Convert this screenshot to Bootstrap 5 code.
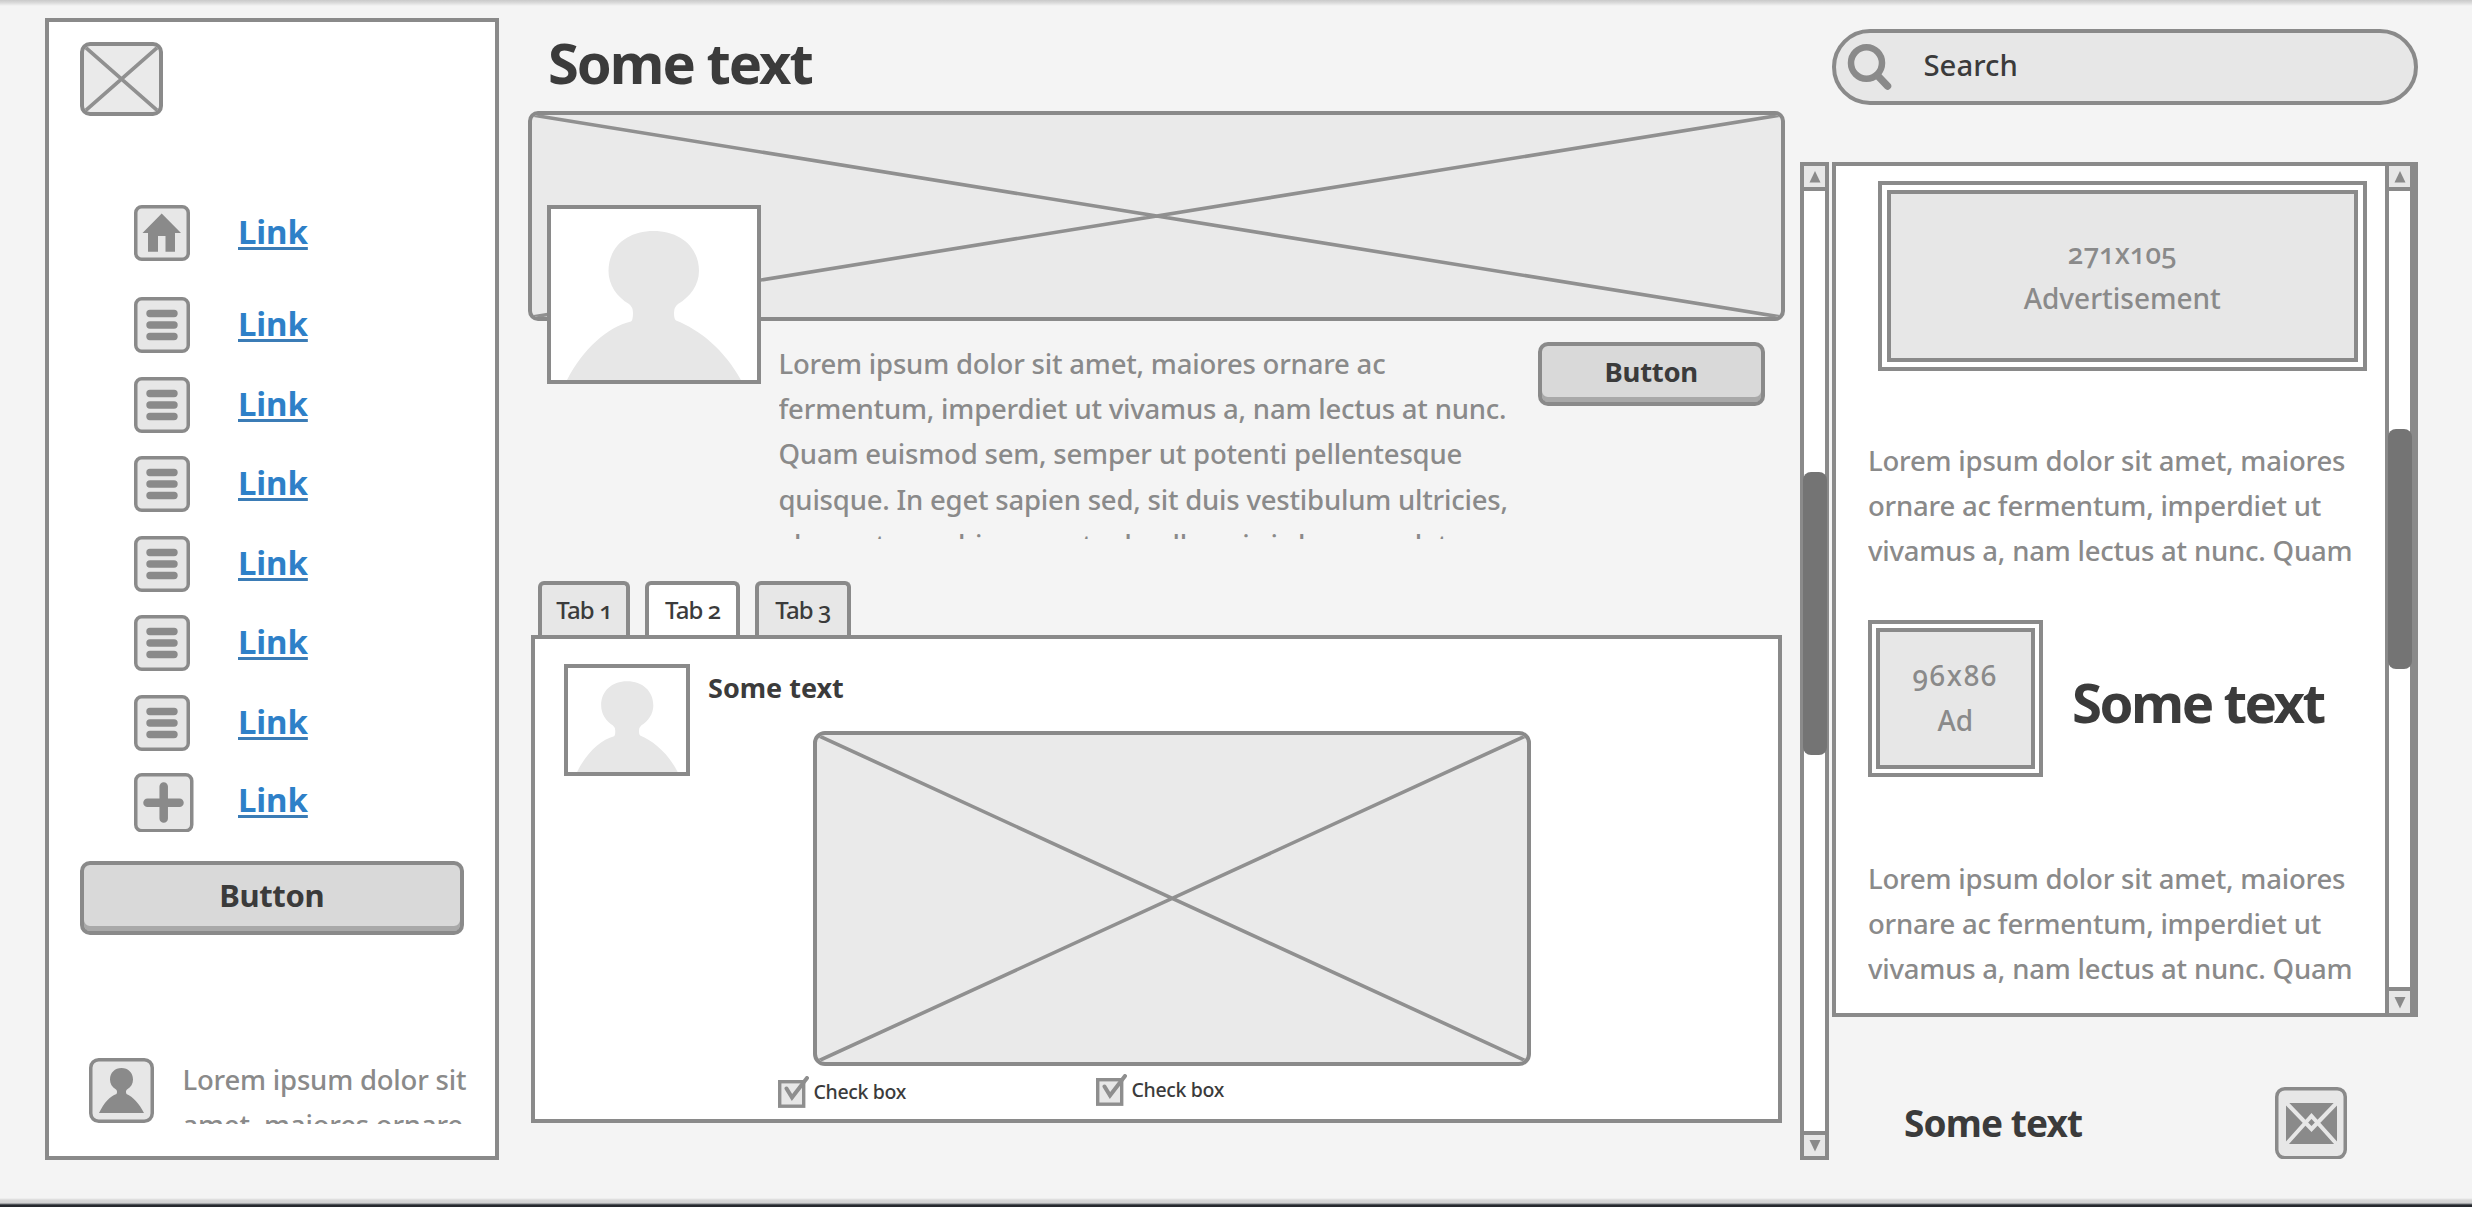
<!DOCTYPE html>
<html lang="en">
<head>
<meta charset="utf-8">
<meta name="viewport" content="width=device-width, initial-scale=1">
<title>Profile wireframe</title>
<link href="https://cdn.jsdelivr.net/npm/bootstrap@5.3.0/dist/css/bootstrap.min.css" rel="stylesheet">
<style>
:root{--line:#8a8a8a;--fill:#e7e7e7;--ink:#3b3b3b}
body{background:#f4f4f4;color:var(--ink);font-family:"Noto Sans",sans-serif;font-variant-numeric:oldstyle-nums;overflow:hidden}
svg{display:block}
h1,h2,h3{font-weight:700;margin:0;white-space:nowrap}
.page{width:2472px;height:1207px;padding-left:45px;background:linear-gradient(#c9c9c9,#dcdcdc 3px,#f4f4f4 6px,#f4f4f4 1198px,#d8d8d8 1200px,#d0d0d0 1203px,#777b80 1204px,#25282d 1205px)}
.box{background:#fff;border:4px solid var(--line)}
.lorem{color:var(--line);font-size:27.5px;line-height:45.25px;font-weight:500;letter-spacing:-.2px;margin:0;white-space:nowrap;overflow:hidden}
.xbox{background:#eaeaea;border:4px solid var(--line);border-radius:10px;overflow:hidden}
.xbox svg{width:100%;height:100%}
.cross{stroke:#909090;stroke-width:3.6;fill:none;vector-effect:non-scaling-stroke}
.tile{width:56px;height:56px;flex:none}
.edge{fill:var(--fill);stroke:var(--line);stroke-width:3.5}
.glyph{fill:var(--line)}
.stroke{stroke:var(--line);fill:none;stroke-linecap:round}
.wbtn{background:#d9d9d9;border:4px solid var(--line);border-radius:10px;color:var(--ink);font-weight:700;box-shadow:inset 0 -5px #a9a9a9;padding:0 0 4px}
/* sidebar */
.side{width:454px;height:1142px;margin-top:18px;padding:20px 0 0 30.5px}
.logo{width:83px;height:74px}
.menu{margin-top:89px;padding-left:54.5px;gap:23.5px}
.menu li:first-child{margin-bottom:12.5px}
.menu li:last-child{margin-top:-1.5px}
.menu a{color:#2e80c8;font-size:33px;line-height:40px;font-weight:700;text-decoration:underline;text-decoration-thickness:3px;text-underline-offset:2.5px;text-decoration-color:#3b7cb6;margin:0 0 2px 48px;letter-spacing:-.1px}
.menu li:last-child a{margin:0 0 4px 44.5px}
.side .wbtn{width:384.5px;height:74px;margin-top:28.7px;font-size:31px;letter-spacing:-.4px}
.user{margin:123px 0 0 9px}
.user .lorem{width:290px;height:67px;margin-left:29px;margin-top:-.6px}
/* main */
.main{width:1272px;margin-left:29px;padding-top:12px}
.title{font-size:56px;line-height:101px;letter-spacing:-2px;padding-left:20px;height:98.5px}
.hero{width:1257px;height:210px}
.profile{width:1257px;height:218.8px}
.face{flex:none;width:213.5px;height:179.5px}
.face svg{width:100%;height:100%}
.profile .face{margin:-116px 0 0 19px;position:relative}
.profile .lorem{width:750px;height:198.5px;margin:20.4px 0 0 18px}
.profile .wbtn{width:226.5px;height:63.5px;margin:21.5px 20.5px 0 auto;font-size:27.5px;letter-spacing:-.3px}
.wtabs{margin:41.4px 0 0 10px;gap:15px;height:54px;border:0}
.wtabs .nav-link{width:95.3px;height:56px;background:var(--fill);border:4px solid var(--line);border-bottom:0;border-radius:6px 6px 0 0;color:var(--ink);font-size:24px;line-height:50px;font-weight:500;letter-spacing:-.9px;padding:0;text-align:center;margin:0}
.wtabs .nav-item:first-child .nav-link{width:92px}
.wtabs .nav-link.active{background:#fff;color:var(--ink);border-color:var(--line)}
.panel{width:1250.5px;height:488.6px;margin-left:3px;position:relative}
.panel .face{width:126.5px;height:112px;margin:25.6px 0 0 28.5px}
.post{margin:29px 0 0 18px}
.post h3{font-size:27px;line-height:40px}
.post .xbox{width:718.5px;height:334.6px;margin:23.3px 0 0 104.5px;border-radius:12px}
.checks{margin:10.4px 0 0 70px;font-size:19.5px;line-height:32px;font-weight:500;letter-spacing:-.35px}
.checks label{width:318px}
.checks svg{margin-right:4.5px}
.checks .raised{margin-top:-2px}
/* scrollbars */
.bar{width:29px;background:#fff;border:4px solid var(--line)}
.bar .cap{height:25.5px;background:var(--fill);border-bottom:4px solid var(--line);padding:5.5px 0 0 4.5px}
.bar .cap:last-child{border-bottom:0;border-top:4px solid var(--line);margin-top:auto}
.thumb{background:#747474;border-radius:8px;margin:0 -1.5px}
/* right column */
.right{width:586px;margin-left:3px;padding-top:29px}
.find{height:76px;background:var(--fill);border:4px solid var(--line);border-radius:38px;font-size:29.3px;font-weight:500;padding-left:8px}
.find span{margin:-2px 0 0 29.5px}
.feed{height:855.2px;margin-top:56.5px}
.feed .bar{border-width:0 4px;width:29px}
.feed .body{width:549px}
.advert{background:var(--fill);border:4px solid var(--line);outline:5px solid #fff;box-shadow:0 0 0 9px var(--line);color:var(--line);font-size:28px;line-height:45px;font-weight:500}
.feed .lorem{margin-left:32px}
.wide{width:471.5px;height:172px;margin:24.5px 0 0 50.5px}
.small-ad{width:158.5px;height:141px;margin-left:40px;outline-width:4px;box-shadow:0 0 0 8px var(--line)}
.dims{letter-spacing:1.6px}
.feed-title{font-size:54.5px;letter-spacing:-2.5px;line-height:60px;margin:7px 0 0 37.5px}
.foot{margin-top:70.3px;padding:0 71px 0 72px}
.foot-title{font-size:37px;letter-spacing:-.9px;line-height:50px}
</style>
</head>
<body>
<svg width="0" height="0" class="position-absolute">
  <symbol id="cross" viewBox="0 0 100 100" preserveAspectRatio="none"><path class="cross" d="M0 0L100 100M0 100L100 0"/></symbol>
  <symbol id="person" viewBox="4 4 205.500 171.500" preserveAspectRatio="none"><path fill="#e7e7e7" d="M19 177C35 145 60 122 84 116.500Q86 115 86 108Q86 102 82 99C70 92 61.500 80 61.500 66C61.500 42 80 26 106.500 26C133 26 152 42 152 66C152 80 143 92 131 99Q127 102 127 108Q127 114 129 115.500C153 125 178 145 195 177Z"/></symbol>
  <symbol id="list" viewBox="0 0 56 56"><rect class="edge" x="1.750" y="1.750" width="52.500" height="52.500" rx="6"/><path class="stroke" stroke-width="7.400" d="M16 16.500H40M16 28H40M16 39.500H40"/></symbol>
  <symbol id="check" viewBox="0 0 31 32"><rect x="1.700" y="5.700" width="24" height="24.500" fill="#e7e7e7" stroke="#8e8e8e" stroke-width="3.400"/><path d="M8.500 12.500L14 21.500L29 2" fill="none" stroke="#8e8e8e" stroke-width="4" stroke-linecap="round"/></symbol>
</svg>
<div class="page d-flex align-items-start">

  <aside class="side box d-flex flex-column align-items-start flex-shrink-0">
    <div class="xbox logo"><svg><use href="#cross"/></svg></div>
    <ul class="menu list-unstyled d-flex flex-column mb-0">
      <li class="d-flex align-items-center"><svg class="tile" viewBox="0 0 56 56"><rect class="edge" x="1.750" y="1.750" width="52.500" height="52.500" rx="6"/><path class="glyph" d="M27.700 8.500L47 28H41V46.700H31.500V31H24V46.700H14V28H8.500Z"/></svg><a href="#">Link</a></li>
      <li class="d-flex align-items-center"><svg class="tile"><use href="#list"/></svg><a href="#">Link</a></li>
      <li class="d-flex align-items-center"><svg class="tile"><use href="#list"/></svg><a href="#">Link</a></li>
      <li class="d-flex align-items-center"><svg class="tile"><use href="#list"/></svg><a href="#">Link</a></li>
      <li class="d-flex align-items-center"><svg class="tile"><use href="#list"/></svg><a href="#">Link</a></li>
      <li class="d-flex align-items-center"><svg class="tile"><use href="#list"/></svg><a href="#">Link</a></li>
      <li class="d-flex align-items-center"><svg class="tile"><use href="#list"/></svg><a href="#">Link</a></li>
      <li class="d-flex align-items-center"><svg width="59.500" height="59.500" viewBox="0 0 59.500 59.500"><rect class="edge" x="1.750" y="1.750" width="56" height="56" rx="6"/><path class="stroke" stroke-width="8.500" d="M13.500 29.700H45.500M29.700 13.500V45.500"/></svg><a href="#">Link</a></li>
    </ul>
    <button class="wbtn">Button</button>
    <div class="user d-flex align-items-start">
      <svg width="65" height="65" viewBox="0 0 65 65"><rect class="edge" x="1.750" y="1.750" width="61.500" height="61.500" rx="8"/><path class="glyph" d="M10 55C15 45 21 38 27.500 36C28.500 34 28 32.500 27 31.500C23 29 21 26 21 21.500C21 14.500 26 10 32.500 10C39 10 44 14.500 44 21.500C44 26 42 29 38 31.500C37 32.500 36.500 34 37.500 36C44 39 50 45 55 55Z"/></svg>
      <p class="lorem">Lorem ipsum dolor sit<br>amet, maiores ornare</p>
    </div>
  </aside>

  <main class="main flex-shrink-0">
    <h1 class="title">Some text</h1>
    <div class="xbox hero"><svg><use href="#cross"/></svg></div>
    <div class="profile d-flex align-items-start">
      <div class="face box"><svg><use href="#person"/></svg></div>
      <p class="lorem">Lorem ipsum dolor sit amet, maiores ornare ac<br>fermentum, imperdiet ut vivamus a, nam lectus at nunc.<br>Quam euismod sem, semper ut potenti pellentesque<br>quisque. In eget sapien sed, sit duis vestibulum ultricies,<br>elementum a hi meas et ad nulla eni vis hac mae let</p>
      <button class="wbtn">Button</button>
    </div>
    <ul class="wtabs nav nav-tabs">
      <li class="nav-item"><a class="nav-link" href="#">Tab 1</a></li>
      <li class="nav-item"><a class="nav-link active" href="#">Tab 2</a></li>
      <li class="nav-item"><a class="nav-link" href="#">Tab 3</a></li>
    </ul>
    <section class="panel box d-flex align-items-start">
      <div class="face box"><svg><use href="#person"/></svg></div>
      <div class="post">
        <h3>Some text</h3>
        <div class="xbox"><svg><use href="#cross"/></svg></div>
        <div class="checks d-flex align-items-start">
          <label class="d-flex"><svg width="31" height="32"><use href="#check"/></svg>Check box</label>
          <label class="d-flex raised"><svg width="31" height="32"><use href="#check"/></svg>Check box</label>
        </div>
      </div>
    </section>
  </main>

  <div class="bar d-flex flex-column flex-shrink-0" style="height:998.5px;margin-top:161.5px">
    <div class="cap"><svg width="12" height="12"><path class="glyph" d="M6 0L11.500 11.500H.5Z"/></svg></div>
    <div class="thumb" style="height:282.5px;margin-top:281px"></div>
    <div class="cap"><svg width="12" height="12"><path class="glyph" d="M6 11.500L11.500 0H.5Z"/></svg></div>
  </div>

  <div class="right flex-shrink-0">
    <div class="find d-flex align-items-center">
      <svg width="50" height="50" viewBox="0 0 50 50"><ellipse class="stroke" cx="22.500" cy="21" rx="15.500" ry="15.700" stroke-width="6.500"/><path class="stroke" stroke-width="7.500" d="M34 34L43.500 44"/></svg>
      <span>Search</span>
    </div>
    <section class="feed box d-flex">
      <div class="body flex-shrink-0">
        <div class="advert wide d-flex flex-column align-items-center justify-content-center"><span>271x105</span><span>Advertisement</span></div>
        <p class="lorem" style="margin-top:75.5px">Lorem ipsum dolor sit amet, maiores<br>ornare ac fermentum, imperdiet ut<br>vivamus a, nam lectus at nunc. Quam</p>
        <div class="d-flex align-items-center" style="margin-top:54.5px">
          <div class="advert small-ad d-flex flex-column align-items-center justify-content-center"><span class="dims">96x86</span><span>Ad</span></div>
          <h2 class="feed-title">Some text</h2>
        </div>
        <p class="lorem" style="margin-top:87px">Lorem ipsum dolor sit amet, maiores<br>ornare ac fermentum, imperdiet ut<br>vivamus a, nam lectus at nunc. Quam</p>
      </div>
      <div class="bar d-flex flex-column flex-shrink-0">
        <div class="cap"><svg width="12" height="12"><path class="glyph" d="M6 0L11.500 11.500H.5Z"/></svg></div>
        <div class="thumb" style="height:239.7px;margin-top:238px"></div>
        <div class="cap"><svg width="12" height="12"><path class="glyph" d="M6 11.500L11.500 0H.5Z"/></svg></div>
      </div>
    </section>
    <div class="foot d-flex align-items-center justify-content-between">
      <h2 class="foot-title">Some text</h2>
      <svg width="72" height="72.500" viewBox="0 0 72 72.500"><rect class="edge" x="1.750" y="1.750" width="68.500" height="69" rx="8"/><rect class="glyph" x="11" y="16" width="51" height="41"/><path d="M10 14.500L36.500 42L63 14.500M10 58.500L36.500 29L63 58.500" fill="none" stroke="#e7e7e7" stroke-width="4"/></svg>
    </div>
  </div>
</div>
<script src="https://cdn.jsdelivr.net/npm/bootstrap@5.3.0/dist/js/bootstrap.bundle.min.js"></script>
</body>
</html>
